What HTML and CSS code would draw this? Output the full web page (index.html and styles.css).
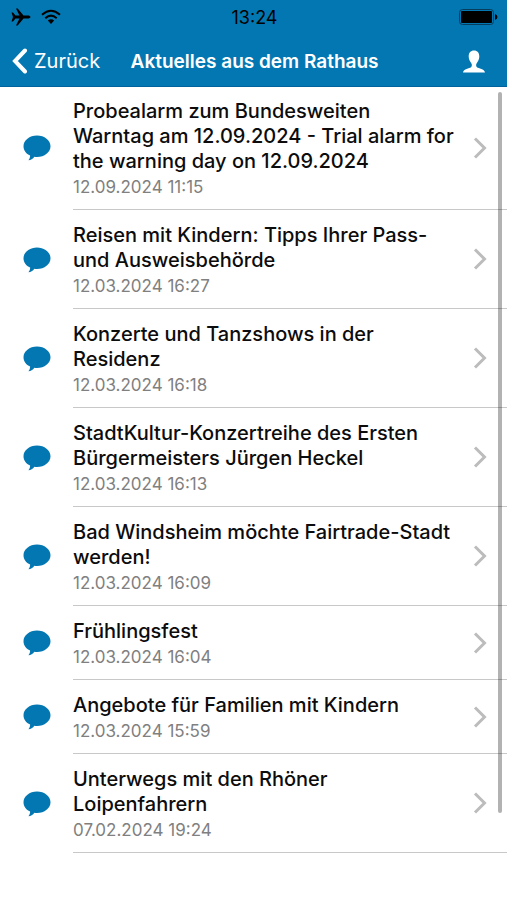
FILE: index.html
```html
<!DOCTYPE html>
<html lang="de">
<head>
<meta charset="utf-8">
<meta name="viewport" content="width=device-width, initial-scale=1">
<title>Aktuelles aus dem Rathaus</title>
<link rel="stylesheet" href="styles.css">
</head>
<body>
<svg class="defs" width="0" height="0" aria-hidden="true">
  <symbol id="bubble" viewBox="0 0 28 26"><path d="M14 0.5C21.5 0.5 27.5 5.3 27.5 11.2S21.5 22 14 22C13 22 12.2 21.9 11.4 21.8C9.8 23.8 7.8 25.2 5.4 25.3C6.6 24 7.2 22.5 7.1 20.6C3.1 18.7 0.5 15.3 0.5 11.2C0.5 5.3 6.5 0.5 14 0.5Z" fill="#0377b2"/></symbol>
  <symbol id="chevron" viewBox="0 0 14 24"><path d="M2 2.5L11.5 12L2 21.5" fill="none" stroke="#bcbcbc" stroke-width="3"/></symbol>
</svg>
<header class="header">
  <div class="status">
    <div class="signals">
      <svg width="20" height="18" viewBox="0 0 20 18" aria-label="Flugmodus"><path d="M0.5 4.5H2L4.5 7.5H8.5L5 0.5H6.7L12.5 7.5H17C18.3 7.5 19.5 8.2 19.5 9S18.3 10.5 17 10.5H12.5L6.7 17.5H5L8.5 10.5H4.5L2 13.5H0.5L2 9Z"/></svg>
      <svg width="20" height="16" viewBox="0 0 20 16" aria-label="WLAN"><g fill="none" stroke="#000" stroke-width="2"><path d="M1 5.7Q10 -2.3 19 5.7"/><path d="M4.3 9.2Q10 4 15.7 9.2"/></g><path d="M6.8 11.5Q10 9 13.2 11.5L10 15Z"/></svg>
    </div>
    <time class="clock">13:24</time>
    <svg class="battery" width="39" height="16" viewBox="0 0 39 16" aria-label="Akku"><rect x="0.5" y="0.5" width="34" height="15" rx="3" fill="none" stroke="#073d5c"/><rect x="2" y="2" width="31" height="12" rx="1"/><path d="M36 5Q38.5 6 38.5 8T36 11Z"/></svg>
  </div>
  <nav class="nav">
    <button class="back" type="button">
      <svg width="16" height="26" viewBox="0 0 16 26" aria-hidden="true"><path d="M13 2.500L3 13L13 23.500" fill="none" stroke="#fff" stroke-width="4" stroke-linecap="round"/></svg>
      <span>Zurück</span>
    </button>
    <h1 class="title">Aktuelles aus dem Rathaus</h1>
    <button class="profile" type="button" aria-label="Profil">
      <svg width="22" height="23" viewBox="0 0 22 23" aria-hidden="true"><path d="M11 0.5C14.4 0.5 16.3 2.8 16.3 6.5C16.3 9.5 15 11.5 13.7 13.2C12.8 14.5 13 16.3 14 17.2C15.5 18.3 21.5 18.7 22 22.5H0C0.5 18.7 6.5 18.3 8 17.2C9 16.3 9.2 14.5 8.3 13.2C7 11.5 5.7 9.5 5.7 6.5C5.7 2.8 7.6 0.5 11 0.5Z" fill="#fff"/></svg>
    </button>
  </nav>
</header>
<main class="content">
  <ul class="list">
    <li><a class="row" href="#"><svg class="bubble"><use href="#bubble"/></svg><div class="body"><div class="text"><h2>Probealarm zum Bundesweiten Warntag am 12.09.2024 - Trial alarm for the warning day on 12.09.2024</h2><time>12.09.2024 11:15</time></div><svg class="chevron"><use href="#chevron"/></svg></div></a></li>
    <li><a class="row" href="#"><svg class="bubble"><use href="#bubble"/></svg><div class="body"><div class="text"><h2>Reisen mit Kindern: Tipps Ihrer Pass- und Ausweisbehörde</h2><time>12.03.2024 16:27</time></div><svg class="chevron"><use href="#chevron"/></svg></div></a></li>
    <li><a class="row" href="#"><svg class="bubble"><use href="#bubble"/></svg><div class="body"><div class="text"><h2>Konzerte und Tanzshows in der Residenz</h2><time>12.03.2024 16:18</time></div><svg class="chevron"><use href="#chevron"/></svg></div></a></li>
    <li><a class="row" href="#"><svg class="bubble"><use href="#bubble"/></svg><div class="body"><div class="text"><h2>StadtKultur-Konzertreihe des Ersten Bürgermeisters Jürgen Heckel</h2><time>12.03.2024 16:13</time></div><svg class="chevron"><use href="#chevron"/></svg></div></a></li>
    <li><a class="row" href="#"><svg class="bubble"><use href="#bubble"/></svg><div class="body"><div class="text"><h2>Bad Windsheim möchte Fairtrade-Stadt werden!</h2><time>12.03.2024 16:09</time></div><svg class="chevron"><use href="#chevron"/></svg></div></a></li>
    <li><a class="row" href="#"><svg class="bubble"><use href="#bubble"/></svg><div class="body"><div class="text"><h2>Frühlingsfest</h2><time>12.03.2024 16:04</time></div><svg class="chevron"><use href="#chevron"/></svg></div></a></li>
    <li><a class="row" href="#"><svg class="bubble"><use href="#bubble"/></svg><div class="body"><div class="text"><h2>Angebote für Familien mit Kindern</h2><time>12.03.2024 15:59</time></div><svg class="chevron"><use href="#chevron"/></svg></div></a></li>
    <li><a class="row" href="#"><svg class="bubble"><use href="#bubble"/></svg><div class="body"><div class="text"><h2>Unterwegs mit den Rhöner Loipenfahrern</h2><time>07.02.2024 19:24</time></div><svg class="chevron"><use href="#chevron"/></svg></div></a></li>
  </ul>
  <div class="scrollbar"></div>
</main>
</body>
</html>
```
FILE: styles.css
```css
* { box-sizing: border-box; }
body {
  margin: 0;
  background: #fff;
  color: #0c0c0c;
  font-family: Inter, "Liberation Sans", sans-serif;
}
svg { display: block; flex: none; }
.defs { position: absolute; }
button {
  padding: 0;
  border: 0;
  background: none;
  color: inherit;
  font: inherit;
}
.header {
  background: #0377b2;
  border-bottom: 1px solid #02639c;
}
.status {
  display: grid;
  grid-template-columns: 1fr auto 1fr;
  align-items: center;
  height: 34px;
  padding: 0 9px 0 11px;
  color: #000;
}
.signals { display: flex; align-items: center; gap: 10px; }
.clock { font-size: 18px; }
.battery { justify-self: end; }
.nav {
  display: flex;
  align-items: center;
  height: 52px;
  padding: 2px 22px 0 12px;
  color: #fff;
}
.back {
  display: flex;
  align-items: center;
  gap: 6px;
  font-size: 20px;
}
.title {
  flex: 1;
  margin: 0;
  padding-right: 54px;
  font-size: 19px;
  font-weight: 600;
  text-align: center;
  white-space: nowrap;
}
.content { position: relative; }
.list {
  margin: -1px 0 0;
  padding: 0;
  list-style: none;
}
.row {
  display: flex;
  align-items: center;
  padding-left: 23px;
  color: inherit;
  text-decoration: none;
}
.bubble { width: 28px; height: 26px; }
.body {
  display: flex;
  flex: 1;
  align-items: center;
  margin-left: 22px;
  padding-right: 20px;
  border-bottom: 1px solid #c8c8c8;
}
.text { flex: 1; padding: 13px 18px 10px 0; }
.text h2 {
  margin: 0 0 1px;
  font-size: 20px;
  line-height: 25px;
  font-weight: 500;
}
.text time {
  display: block;
  font-size: 17px;
  line-height: 24px;
  color: #808080;
}
.chevron { width: 14px; height: 24px; }
.scrollbar {
  position: absolute;
  top: 6px;
  right: 5px;
  width: 4px;
  height: 94%;
  border-radius: 2px;
  background: rgba(0, 0, 0, 0.3);
}
```
